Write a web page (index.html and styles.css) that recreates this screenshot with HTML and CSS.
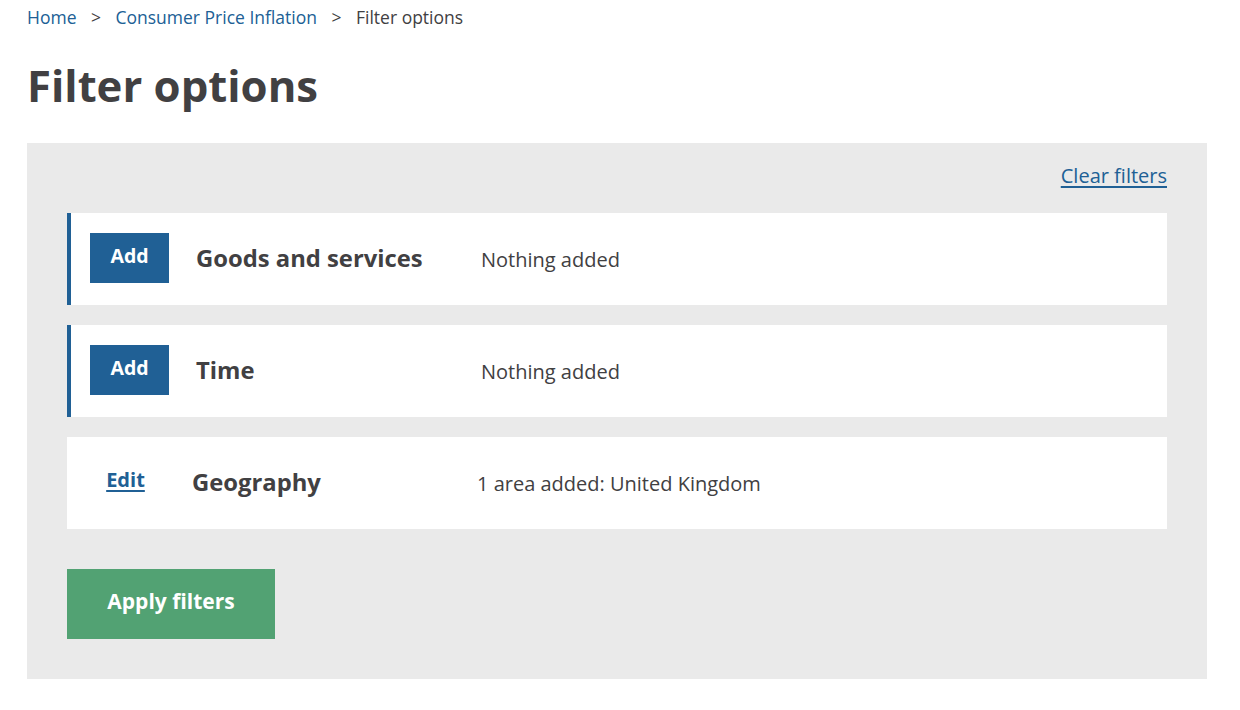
FILE: index.html
```html
<!DOCTYPE html>
<html lang="en">
<head>
<meta charset="utf-8">
<title>Filter options</title>
<link rel="stylesheet" href="styles.css">
</head>
<body>
<div class="page">
  <nav class="breadcrumb">
    <a href="#">Home</a><span class="sep">&gt;</span><a href="#">Consumer Price Inflation</a><span class="sep">&gt;</span><span class="current">Filter options</span>
  </nav>
  <h1 class="title">Filter options</h1>
  <section class="panel">
    <div class="clear-row"><a href="#" class="clear">Clear filters</a></div>
    <div class="card card--empty">
      <div class="action"><button class="btn-add">Add</button></div>
      <div class="label">Goods and services</div>
      <div class="value">Nothing added</div>
    </div>
    <div class="card card--empty">
      <div class="action"><button class="btn-add">Add</button></div>
      <div class="label">Time</div>
      <div class="value">Nothing added</div>
    </div>
    <div class="card">
      <div class="action"><a href="#" class="edit">Edit</a></div>
      <div class="label">Geography</div>
      <div class="value">1 area added: United Kingdom</div>
    </div>
    <div class="apply-row"><button class="btn-apply">Apply filters</button></div>
  </section>
</div>
</body>
</html>
```
FILE: styles.css
```css
* { box-sizing: border-box; }
body {
  margin: 0;
  font-family: "Open Sans", "Liberation Sans", sans-serif;
  color: #414042;
  background: #fff;
}
.page {
  padding: 0 33px 0 27px;
}
.breadcrumb {
  font-size: 17.5px;
  line-height: 24px;
  padding-top: 5px;
  display: flex;
  align-items: center;
}
.breadcrumb a {
  color: #206095;
  text-decoration: none;
}
.breadcrumb .sep {
  margin: 0 14.5px;
  color: #414042;
}
.breadcrumb .current { color: #414042; }
.title {
  margin: 27px 0 0 0;
  font-size: 43.7px;
  line-height: 58px;
  font-weight: 700;
  color: #414042;
}
.panel {
  margin-top: 29px;
  background: #eaeaea;
  padding: 18px 40px 40px 40px;
  display: flex;
  flex-direction: column;
  gap: 20px;
}
.clear-row {
  display: flex;
  justify-content: flex-end;
  font-size: 20px;
  line-height: 30px;
  margin-bottom: 2px;
}
.clear {
  color: #206095;
  text-decoration: underline;
  text-underline-offset: 3px;
}
.card {
  background: #fff;
  height: 92px;
  display: flex;
  align-items: center;
  padding-left: 19px;
}
.card--empty {
  border-left: 4px solid #206095;
}
.action {
  width: 79px;
  display: flex;
  justify-content: center;
  flex-shrink: 0;
  padding-bottom: 2px;
}
.btn-add {
  width: 79px;
  height: 50px;
  border: 0;
  background: #206095;
  color: #fff;
  font-family: inherit;
  font-weight: 700;
  font-size: 19.5px;
  padding: 0 0 6px 0;
  cursor: pointer;
}
.edit {
  color: #206095;
  font-weight: 700;
  font-size: 20px;
  text-decoration: underline;
  text-underline-offset: 3px;
  margin-bottom: 6px;
}
.label {
  margin-left: 27px;
  width: 285px;
  flex-shrink: 0;
  font-size: 23.8px;
  font-weight: 700;
  color: #414042;
  padding-bottom: 2px;
}
.value {
  font-size: 20px;
  color: #414042;
}
.apply-row {
  display: flex;
  margin-top: 20px;
}
.btn-apply {
  width: 208px;
  height: 70px;
  border: 0;
  background: #52a273;
  color: #fff;
  font-family: inherit;
  font-weight: 700;
  font-size: 21px;
  padding: 0 0 6px 0;
  cursor: pointer;
}
```
